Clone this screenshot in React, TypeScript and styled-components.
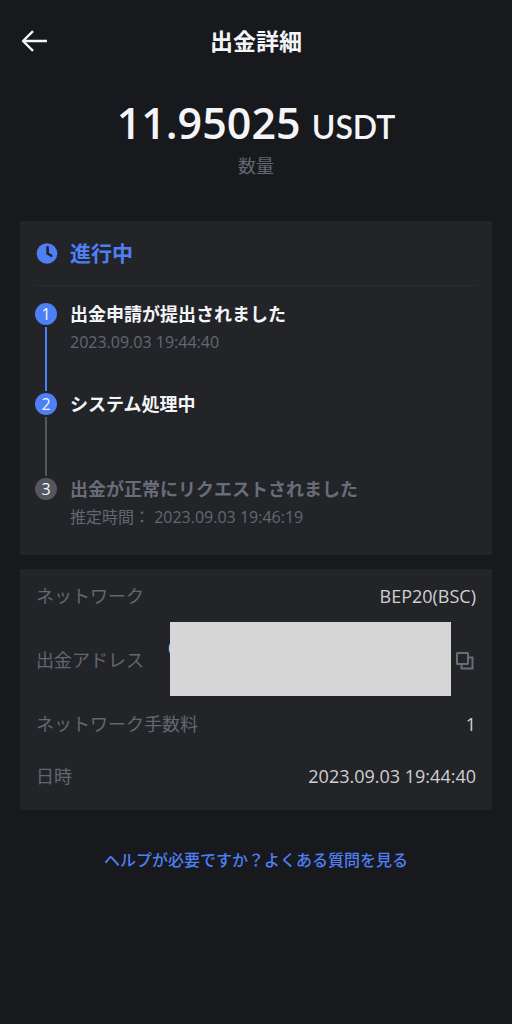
import React from "react";
import styled, { createGlobalStyle } from "styled-components";

const color = {
  page: "#18191d",
  card: "#232428",
  divider: "#2c2d32",
  text: "#f4f5f8",
  value: "#cfd0d3",
  muted: "#696d79",
  label: "#636772",
  blue: "#4f7ff5",
  pending: "#545761",
};

const GlobalStyle = createGlobalStyle`
  * { box-sizing: border-box; }
  body {
    margin: 0;
    background: ${color.page};
    color: ${color.text};
    font-family: "Open Sans", "Noto Sans CJK JP", sans-serif;
  }
  h1, h2, p, ol, dl, dd { margin: 0; padding: 0; }
  button { border: 0; padding: 0; background: none; cursor: pointer; }
  svg { display: block; }
`;

const Page = styled.div`
  min-height: 100vh;
  padding: 0 20px;
`;

const Header = styled.header`
  display: grid;
  grid-template-columns: 28px 1fr 28px;
  align-items: center;
  height: 82px;
`;

const Title = styled.h1`
  text-align: center;
  font-size: 23px;
  line-height: 32px;
  font-weight: 700;
`;

const IconButton = styled.button`
  flex: none;
  color: ${color.muted};
`;

const BackButton = styled(IconButton)`
  color: ${color.text};
`;

const Summary = styled.section`
  height: 139px;
  padding-top: 14px;
  text-align: center;
`;

const Amount = styled.p`
  font-size: 43px;
  line-height: 54px;
  font-weight: 600;
`;

const Currency = styled.span`
  font-family: Lato, sans-serif;
  font-size: 32px;
  font-weight: 600;
`;

const AmountLabel = styled.p`
  color: ${color.label};
  font-size: 18px;
  line-height: 24px;
`;

const Card = styled.section`
  background: ${color.card};
  padding: 0 16px;
  margin-bottom: 14px;
`;

const StatusHeader = styled.div`
  display: flex;
  align-items: center;
  gap: 12px;
  height: 65px;
  border-bottom: 1px solid ${color.divider};
  color: ${color.blue};
`;

const StatusTitle = styled.h2`
  font-size: 21px;
  line-height: 30px;
  font-weight: 700;
`;

const Steps = styled.ol`
  list-style: none;
  margin: 0 0 0 -1px;
  padding: 17px 0 27px;
`;

const Step = styled.li<{ $height?: number }>`
  display: flex;
  gap: 13px;
  min-height: ${(p) => p.$height ?? 0}px;
`;

const Track = styled.div`
  display: flex;
  flex-direction: column;
  align-items: center;
  gap: 2px;
`;

const Marker = styled.span<{ $pending?: boolean }>`
  width: 22px;
  height: 22px;
  border-radius: 50%;
  background: ${(p) => (p.$pending ? color.pending : color.blue)};
  font-size: 16px;
  line-height: 22px;
  text-align: center;
`;

const Line = styled.span<{ $pending?: boolean }>`
  flex: 1;
  width: 2px;
  margin-bottom: 2px;
  background: ${(p) => (p.$pending ? color.pending : color.blue)};
`;

const StepTitle = styled.p<{ $pending?: boolean }>`
  color: ${(p) => (p.$pending ? color.muted : color.text)};
  font-size: 18px;
  line-height: 22px;
  font-weight: 700;
`;

const StepTime = styled.p`
  margin-top: 6px;
  color: ${color.label};
  font-size: 16px;
  line-height: 22px;
`;

const Details = styled.dl`
  display: flex;
  flex-direction: column;
  gap: 26px;
  margin: 0;
  padding: 14px 0 21px;
`;

const Row = styled.div`
  display: flex;
  align-items: center;
  justify-content: space-between;
  font-size: 18px;
  line-height: 26px;
`;

const Label = styled.dt`
  color: ${color.label};
`;

const Value = styled.dd`
  color: ${color.value};
`;

const AddressValue = styled(Value)`
  display: flex;
  align-items: center;
  gap: 4px;
`;

const Address = styled.span`
  position: relative;
  width: 283px;
  height: 50px;
`;

const Mask = styled.span`
  position: absolute;
  inset: -13px 0 -11px 2px;
  background: #d6d6d6;
`;

const HelpLink = styled.a`
  display: block;
  margin-top: 36px;
  color: ${color.blue};
  font-size: 16px;
  line-height: 28px;
  font-weight: 500;
  text-align: center;
  text-decoration: none;
`;

export default function App() {
  return (
    <Page>
      <GlobalStyle />
      <Header>
        <BackButton aria-label="戻る">
          <svg width="28" height="24" viewBox="0 0 28 24" fill="none" stroke="currentColor" strokeWidth="2.4">
            <path d="M27 12H3M13 2.200L3 12l10 9.800" strokeLinejoin="round" />
          </svg>
        </BackButton>
        <Title>出金詳細</Title>
      </Header>
      <Summary>
        <Amount>
          11.95025 <Currency>USDT</Currency>
        </Amount>
        <AmountLabel>数量</AmountLabel>
      </Summary>
      <main>
        <Card>
          <StatusHeader>
            <svg width="22" height="22" viewBox="0 0 22 22">
              <circle cx="11" cy="11.500" r="10.300" fill="currentColor" />
              <path
                d="M11.600 5.300v6.200l3.600 2.200"
                fill="none"
                stroke={color.card}
                strokeWidth="2.600"
                strokeLinecap="round"
                strokeLinejoin="round"
              />
            </svg>
            <StatusTitle>進行中</StatusTitle>
          </StatusHeader>
          <Steps>
            <Step $height={90}>
              <Track>
                <Marker>1</Marker>
                <Line />
              </Track>
              <div>
                <StepTitle>出金申請が提出されました</StepTitle>
                <StepTime>2023.09.03 19:44:40</StepTime>
              </div>
            </Step>
            <Step $height={85}>
              <Track>
                <Marker>2</Marker>
                <Line $pending />
              </Track>
              <StepTitle>システム処理中</StepTitle>
            </Step>
            <Step>
              <Track>
                <Marker $pending>3</Marker>
              </Track>
              <div>
                <StepTitle $pending>出金が正常にリクエストされました</StepTitle>
                <StepTime>推定時間： 2023.09.03 19:46:19</StepTime>
              </div>
            </Step>
          </Steps>
        </Card>
        <Card>
          <Details>
            <Row>
              <Label>ネットワーク</Label>
              <Value>BEP20(BSC)</Value>
            </Row>
            <Row>
              <Label>出金アドレス</Label>
              <AddressValue>
                <Address>
                  0
                  <Mask />
                </Address>
                <IconButton aria-label="アドレスをコピー">
                  <svg width="21" height="22" viewBox="0 0 21 22" fill="none" stroke="currentColor" strokeWidth="2">
                    <rect x="2" y="4" width="11" height="11" rx="0.500" />
                    <path d="M13 8.500h4.500v11H6.500V15" />
                  </svg>
                </IconButton>
              </AddressValue>
            </Row>
            <Row>
              <Label>ネットワーク手数料</Label>
              <Value>1</Value>
            </Row>
            <Row>
              <Label>日時</Label>
              <Value>2023.09.03 19:44:40</Value>
            </Row>
          </Details>
        </Card>
      </main>
      <HelpLink href="#faq">ヘルプが必要ですか？よくある質問を見る</HelpLink>
    </Page>
  );
}
